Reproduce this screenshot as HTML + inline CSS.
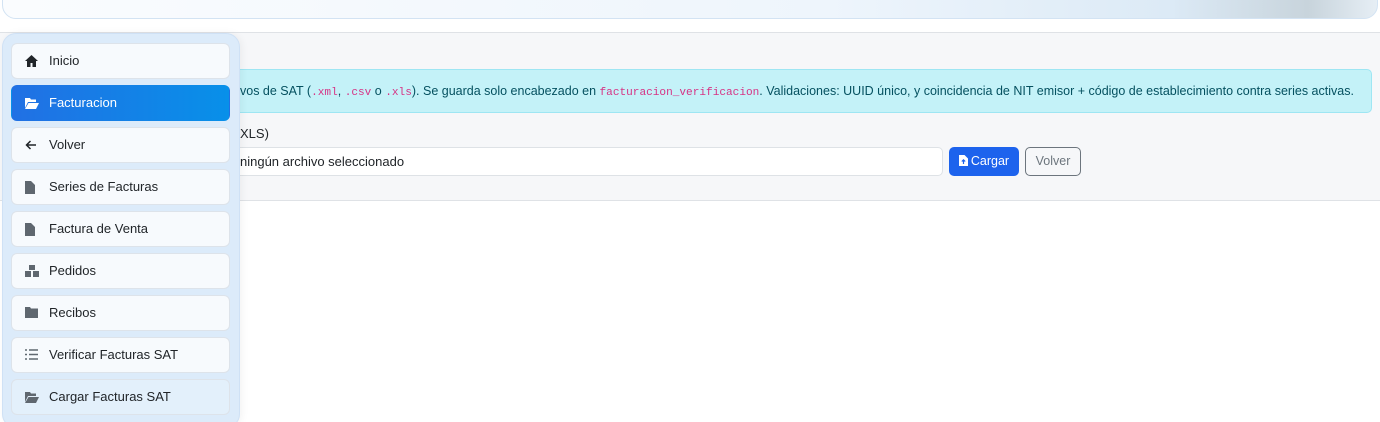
<!DOCTYPE html>
<html><head><meta charset="utf-8"><style>
*{box-sizing:border-box;margin:0;padding:0}
html,body{width:1380px;height:422px;overflow:hidden}
body{background:#fff;font-family:"Liberation Sans",sans-serif;position:relative;color:#212529}
.hdr{position:absolute;left:2px;top:-20px;width:1376px;height:39px;border:1px solid #d3e3f3;border-radius:14px;background:linear-gradient(90deg,#fafcfe 0%,#eef5fc 60%,#dceaf6 85%,#c8d4dc 95%,#e6eef5 100%)}
.main{position:absolute;left:0;top:32px;width:1380px;height:169px;background:#f6f7f9;border-top:1px solid #dfe2e6;border-bottom:1px solid #dfe2e6}
.alert{position:absolute;left:200px;top:69px;width:1172px;height:44px;background:#c4f2f8;border:1px solid #9ee6f3;border-radius:5px;font-size:12.5px;color:#055160;line-height:42px;padding-left:39px;white-space:nowrap;overflow:hidden}
code{font-family:"Liberation Mono",monospace;color:#d63384;font-size:11.1px}
.lbl{position:absolute;left:240px;top:126px;font-size:13px}
.inp{position:absolute;left:200px;top:147px;width:743px;height:29px;background:#fff;border:1px solid #dee2e6;border-radius:5px;font-size:13px;line-height:27px;padding-left:39px}
.b1{position:absolute;left:949px;top:147px;width:70px;height:29px;background:#1d63ed;border-radius:5px;color:#fff;font-size:12.5px;line-height:29px;text-align:center}
.b1 svg{vertical-align:-1px;margin-right:3px}
.b2{position:absolute;left:1025px;top:147px;width:56px;height:29px;border:1px solid #6c757d;border-radius:5px;color:#6c757d;font-size:12.5px;line-height:27px;text-align:center}
.side{position:absolute;left:2px;top:33px;width:238px;height:395px;background:#dcebfa;border:1px solid #cfe1f5;border-radius:14px;box-shadow:2px 0 8px rgba(0,0,0,.05)}
.it{position:absolute;left:11px;width:219px;height:36px;background:#f7fafd;border:1px solid #dde3ea;border-radius:6px;font-size:13px;line-height:34px;padding-left:37px;color:#212529}
.it svg{position:absolute;left:13px;top:11px}
.act{background:linear-gradient(90deg,#2170e4,#0890e9);color:#fff;border-color:transparent}
.sel{background:#e3f0fb}
</style></head><body>
<div class="hdr"></div>
<div class="main"></div>
<div class="alert">vos de SAT (<code>.xml</code>, <code>.csv</code> o <code>.xls</code>). Se guarda solo encabezado en <code>facturacion_verificacion</code>. Validaciones: UUID único, y coincidencia de NIT emisor + código de establecimiento contra series activas.</div>
<div class="lbl">XLS)</div>
<div class="inp">ningún archivo seleccionado</div>
<div class="b1"><svg width="9" height="11" viewBox="0 0 9 11"><path d="M0 0h5.5L9 3.5V11H0z" fill="#fff"/><path d="M4.5 9V5M2.8 6.5l1.7-1.7 1.7 1.7" stroke="#1d63ed" stroke-width="1.2" fill="none"/></svg>Cargar</div>
<div class="b2">Volver</div>
<div class="side"></div>
<div class="it" style="top:43px"><svg width="13" height="12" viewBox="0 0 13 12"><path d="M6.5 0L0 6h2v6h3.5V8h2v4H11V6h2z" fill="#212529"/></svg>Inicio</div>
<div class="it act" style="top:85px"><svg width="14" height="12" viewBox="0 0 14 12"><path d="M0 1h5l1 1.5h5V5H3L0 11zM3.5 6H14l-3 6H0z" fill="#fff"/></svg>Facturacion</div>
<div class="it" style="top:127px"><svg width="12" height="12" viewBox="0 0 12 12"><path d="M11 6H1.5M5.5 2L1.5 6l4 4" stroke="#212529" stroke-width="1.5" fill="none"/></svg>Volver</div>
<div class="it" style="top:169px"><svg width="10" height="13" viewBox="0 0 10 13"><path d="M0 0h6l4 4v9H0z" fill="#5f676f"/></svg>Series de Facturas</div>
<div class="it" style="top:211px"><svg width="10" height="13" viewBox="0 0 10 13"><path d="M0 0h6l4 4v9H0z" fill="#5f676f"/></svg>Factura de Venta</div>
<div class="it" style="top:253px"><svg width="14" height="12" viewBox="0 0 14 12"><path d="M4 0h6v5H4zM0 6h6v6H0zM8 6h6v6H8z" fill="#5f676f"/></svg>Pedidos</div>
<div class="it" style="top:295px"><svg width="13" height="11" viewBox="0 0 13 11"><path d="M0 0h5l1 1.5h7V11H0z" fill="#5f676f"/></svg>Recibos</div>
<div class="it" style="top:337px"><svg width="13" height="11" viewBox="0 0 13 11"><path d="M0 1h2M0 5.5h2M0 10h2M4 1h9M4 5.5h9M4 10h9" stroke="#5f676f" stroke-width="1.4"/></svg>Verificar Facturas SAT</div>
<div class="it sel" style="top:379px"><svg width="14" height="12" viewBox="0 0 14 12"><path d="M0 1h5l1 1.5h5V5H3L0 11zM3.5 6H14l-3 6H0z" fill="#5f676f"/></svg>Cargar Facturas SAT</div>
</body></html>
